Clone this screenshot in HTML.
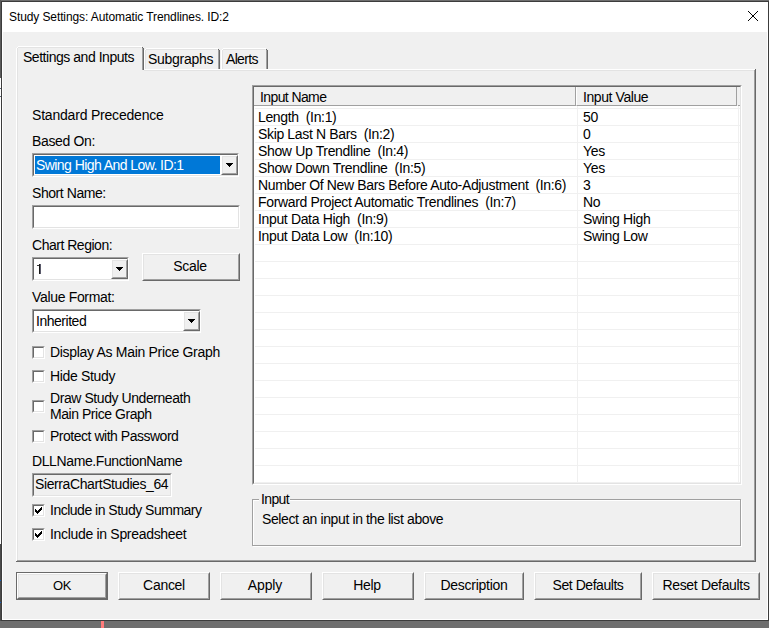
<!DOCTYPE html>
<html><head><meta charset="utf-8">
<style>
*{margin:0;padding:0;box-sizing:border-box}
html,body{width:769px;height:628px;overflow:hidden;background:#6e6e6e}
body{position:relative;font-family:"Liberation Sans",sans-serif;font-size:14px;color:#000;word-spacing:0}
.a{position:absolute}
.t{position:absolute;white-space:pre;line-height:15px;height:15px}
.r{position:absolute;background:#000}
/* sunken 3d */
.sunk{position:absolute;border-top:1px solid #a0a0a0;border-left:1px solid #a0a0a0;border-right:1px solid #fff;border-bottom:1px solid #fff}
.sunk>.in{position:absolute;left:0;top:0;right:0;bottom:0;border-top:1px solid #696969;border-left:1px solid #696969;border-right:1px solid #e3e3e3;border-bottom:1px solid #e3e3e3}
.btn{position:absolute;background:#f0f0f0;border-top:1px solid #fff;border-left:1px solid #fff;border-right:1px solid #696969;border-bottom:1px solid #696969}
.btn>.in{position:absolute;left:0;top:0;right:0;bottom:0;border-top:1px solid #e3e3e3;border-left:1px solid #e3e3e3;border-right:1px solid #a0a0a0;border-bottom:1px solid #a0a0a0}
.cb{position:absolute;width:13px;height:13px;background:#fff;border-top:1px solid #a0a0a0;border-left:1px solid #a0a0a0;border-right:1px solid #fff;border-bottom:1px solid #fff}
.cb>.in{position:absolute;left:0;top:0;right:0;bottom:0;border-top:1px solid #696969;border-left:1px solid #696969;border-right:1px solid #e3e3e3;border-bottom:1px solid #e3e3e3}
.lbl{position:absolute;white-space:pre;line-height:15px;height:15px;text-align:center}
</style></head><body>
<!-- dialog frame -->
<div class="a" style="left:0;top:0;width:1px;height:78px;background:#5a5a5a"></div>
<div class="a" style="left:0;top:78px;width:1px;height:466px;background:#fff"></div>
<div class="a" style="left:0;top:88px;width:1px;height:1px;background:#606a78"></div>
<div class="a" style="left:0;top:96px;width:1px;height:1px;background:#606a78"></div>
<div class="a" style="left:0;top:544px;width:1px;height:77px;background:#4a4a4a"></div>
<div class="a" style="left:0;top:580px;width:1px;height:1px;background:#1060c0"></div>
<div class="a" style="left:0;top:602px;width:1px;height:1px;background:#1060c0"></div>
<div class="a" style="left:1px;top:1px;width:768px;height:620px;background:#3c3c3c"></div>
<div class="a" style="left:2px;top:2px;width:766px;height:618px;background:#fff"></div>
<div class="a" style="left:3px;top:32px;width:764px;height:587px;background:#f0f0f0"></div>
<!-- title -->
<div class="t" style="left:9px;top:10px;font-size:12px;letter-spacing:-0.1px;word-spacing:0">Study Settings: Automatic Trendlines. ID:2</div>
<svg class="a" style="left:748px;top:11px" width="10" height="10" shape-rendering="crispEdges">
<path d="M0 0h1v1h1v1h1v1h1v1h2v-1h1v-1h1v-1h1v-1h1v1h-1v1h-1v1h-1v1h-1v2h1v1h1v1h1v1h1v1h-1v-1h-1v-1h-1v-1h-1v-1h-2v1h-1v1h-1v1h-1v1h-1v-1h1v-1h1v-1h1v-1h1v-2h-1v-1h-1v-1h-1v-1h-1z" fill="#000"/>
</svg>

<!-- tab panel -->
<div class="a" style="left:16px;top:69px;width:740px;height:1px;background:#fff"></div>
<div class="a" style="left:16px;top:69px;width:1px;height:493px;background:#fff"></div>
<div class="a" style="left:755px;top:69px;width:1px;height:493px;background:#696969"></div>
<div class="a" style="left:16px;top:561px;width:740px;height:1px;background:#696969"></div>
<div class="a" style="left:17px;top:70px;width:738px;height:1px;background:#e3e3e3"></div>
<div class="a" style="left:17px;top:70px;width:1px;height:491px;background:#e3e3e3"></div>
<div class="a" style="left:754px;top:70px;width:1px;height:491px;background:#a0a0a0"></div>
<div class="a" style="left:17px;top:560px;width:738px;height:1px;background:#a0a0a0"></div>
<!-- tabs -->
<div class="a" style="left:146px;top:48px;width:72px;height:1px;background:#fff"></div>
<div class="a" style="left:146px;top:49px;width:71px;height:1px;background:#e3e3e3"></div>
<div class="a" style="left:145px;top:49px;width:1px;height:1px;background:#fff"></div>
<div class="a" style="left:144px;top:50px;width:1px;height:19px;background:#fff"></div>
<div class="a" style="left:145px;top:50px;width:1px;height:19px;background:#e3e3e3"></div>
<div class="a" style="left:218px;top:49px;width:1px;height:1px;background:#696969"></div>
<div class="a" style="left:218px;top:50px;width:1px;height:19px;background:#a0a0a0"></div>
<div class="a" style="left:219px;top:50px;width:1px;height:19px;background:#696969"></div>
<div class="t" style="left:148px;top:52px;letter-spacing:-0.276px">Subgraphs</div>
<div class="a" style="left:223px;top:48px;width:43px;height:1px;background:#fff"></div>
<div class="a" style="left:223px;top:49px;width:42px;height:1px;background:#e3e3e3"></div>
<div class="a" style="left:222px;top:49px;width:1px;height:1px;background:#fff"></div>
<div class="a" style="left:221px;top:50px;width:1px;height:19px;background:#fff"></div>
<div class="a" style="left:222px;top:50px;width:1px;height:19px;background:#e3e3e3"></div>
<div class="a" style="left:266px;top:49px;width:1px;height:1px;background:#696969"></div>
<div class="a" style="left:266px;top:50px;width:1px;height:19px;background:#a0a0a0"></div>
<div class="a" style="left:267px;top:50px;width:1px;height:19px;background:#696969"></div>
<div class="t" style="left:226px;top:52px;letter-spacing:-0.68px">Alerts</div>
<!-- selected tab -->
<div class="a" style="left:17px;top:47px;width:127px;height:25px;background:#f0f0f0"></div>
<div class="a" style="left:18px;top:46px;width:124px;height:1px;background:#fff"></div>
<div class="a" style="left:18px;top:47px;width:123px;height:1px;background:#e3e3e3"></div>
<div class="a" style="left:17px;top:47px;width:1px;height:1px;background:#fff"></div>
<div class="a" style="left:16px;top:48px;width:1px;height:22px;background:#fff"></div>
<div class="a" style="left:17px;top:48px;width:1px;height:24px;background:#e3e3e3"></div>
<div class="a" style="left:142px;top:47px;width:1px;height:1px;background:#696969"></div>
<div class="a" style="left:142px;top:48px;width:1px;height:22px;background:#a0a0a0"></div>
<div class="a" style="left:143px;top:48px;width:1px;height:22px;background:#696969"></div>
<div class="t" style="left:23px;top:50px;letter-spacing:-0.467px">Settings and Inputs</div>

<!-- left column -->
<div class="t" style="left:32px;top:108px;letter-spacing:-0.2px">Standard Precedence</div>
<div class="t" style="left:32px;top:134px;letter-spacing:-0.349px">Based On:</div>
<div class="sunk" style="left:32px;top:153px;width:207px;height:24px;background:#fff"><div class="in"></div></div>
<div class="a" style="left:35px;top:156px;width:185px;height:18px;background:#0078d7"></div>
<div class="t" style="left:36px;top:158px;color:#fff;letter-spacing:-0.565px">Swing High And Low. ID:1</div>
<div class="btn" style="left:221px;top:155px;width:17px;height:20px"><div class="in"></div></div>
<svg class="a" style="left:226px;top:163px" width="7" height="4" shape-rendering="crispEdges"><path d="M0 0h7v1h-1v1h-1v1h-1v1h-1v-1h-1v-1h-1v-1h-1z" fill="#000"/></svg>

<div class="t" style="left:32px;top:186px;letter-spacing:-0.44px">Short Name:</div>
<div class="sunk" style="left:32px;top:205px;width:208px;height:24px;background:#fff"><div class="in"></div></div>

<div class="t" style="left:32px;top:238px;letter-spacing:-0.483px">Chart Region:</div>
<div class="sunk" style="left:32px;top:257px;width:97px;height:24px;background:#fff"><div class="in"></div></div>
<div class="a" style="left:39px;top:264px;width:1px;height:10px;background:#1a1a1a"></div><div class="a" style="left:40px;top:264px;width:1px;height:10px;background:#5a5a6a"></div><div class="a" style="left:37px;top:265px;width:2px;height:1px;background:#3a3a3a"></div>
<div class="btn" style="left:111px;top:259px;width:17px;height:20px"><div class="in"></div></div>
<svg class="a" style="left:116px;top:267px" width="7" height="4" shape-rendering="crispEdges"><path d="M0 0h7v1h-1v1h-1v1h-1v1h-1v-1h-1v-1h-1v-1h-1z" fill="#000"/></svg>
<div class="btn" style="left:142px;top:253px;width:98px;height:28px"><div class="in"></div></div>
<div class="lbl" style="left:141px;top:259px;width:98px;letter-spacing:-0.3px">Scale</div>

<div class="t" style="left:32px;top:290px;letter-spacing:-0.333px">Value Format:</div>
<div class="sunk" style="left:32px;top:309px;width:169px;height:24px;background:#fff"><div class="in"></div></div>
<div class="t" style="left:36px;top:314px;letter-spacing:-0.475px">Inherited</div>
<div class="btn" style="left:183px;top:311px;width:17px;height:20px"><div class="in"></div></div>
<svg class="a" style="left:188px;top:319px" width="7" height="4" shape-rendering="crispEdges"><path d="M0 0h7v1h-1v1h-1v1h-1v1h-1v-1h-1v-1h-1v-1h-1z" fill="#000"/></svg>

<div class="cb" style="left:32px;top:346px"><div class="in"></div></div>
<div class="t" style="left:50px;top:345px;letter-spacing:-0.308px">Display As Main Price Graph</div>
<div class="cb" style="left:32px;top:370px"><div class="in"></div></div>
<div class="t" style="left:50px;top:369px;letter-spacing:-0.333px">Hide Study</div>
<div class="cb" style="left:32px;top:400px"><div class="in"></div></div>
<div class="t" style="left:50px;top:391px;letter-spacing:-0.43px">Draw Study Underneath</div>
<div class="t" style="left:50px;top:407px;letter-spacing:-0.454px">Main Price Graph</div>
<div class="cb" style="left:32px;top:430px"><div class="in"></div></div>
<div class="t" style="left:50px;top:429px;letter-spacing:-0.48px">Protect with Password</div>

<div class="t" style="left:32px;top:454px;letter-spacing:-0.39px">DLLName.FunctionName</div>
<div class="sunk" style="left:32px;top:473px;width:140px;height:24px;background:#f0f0f0"><div class="in"></div></div>
<div class="t" style="left:35px;top:477px;width:134px;overflow:hidden;letter-spacing:-0.4px">SierraChartStudies_64.dll</div>

<div class="cb" style="left:32px;top:504px"><div class="in"></div></div>
<svg class="a" style="left:35px;top:507px" width="7" height="7" shape-rendering="crispEdges"><path d="M6 0h1v3h-1v1h-1v1h-1v1h-1v1h-1v-1h-1v-1h-1v-3h1v1h1v1h1v-1h1v-1h1v-1h1z" fill="#000"/></svg>
<div class="t" style="left:50px;top:503px;letter-spacing:-0.496px">Include in Study Summary</div>
<div class="cb" style="left:32px;top:528px"><div class="in"></div></div>
<svg class="a" style="left:35px;top:531px" width="7" height="7" shape-rendering="crispEdges"><path d="M6 0h1v3h-1v1h-1v1h-1v1h-1v1h-1v-1h-1v-1h-1v-3h1v1h1v1h1v-1h1v-1h1v-1h1z" fill="#000"/></svg>
<div class="t" style="left:50px;top:527px;letter-spacing:-0.314px">Include in Spreadsheet</div>

<!-- listview -->
<div class="sunk" style="left:252px;top:85px;width:490px;height:400px;background:#fff"><div class="in"></div></div>
<div id="lv" class="a" style="font-size:14px;word-spacing:0;letter-spacing:-0.35px;left:254px;top:87px;width:486px;height:396px;overflow:hidden">
  <div class="a" style="left:0;top:0;width:486px;height:19px;background:#f0f0f0"></div>
  <div class="a" style="left:0;top:0;width:322px;height:19px;border-right:1px solid #a0a0a0;border-bottom:1px solid #a0a0a0"></div>
  <div class="a" style="left:322px;top:0;width:161px;height:19px;border-left:1px solid #fff;border-right:1px solid #a0a0a0;border-bottom:1px solid #a0a0a0"></div>
  <div class="t" style="left:6px;top:3px;letter-spacing:-0.6px">Input Name</div>
  <div class="t" style="left:329px;top:3px;letter-spacing:-0.42px">Input Value</div>
  <div class="a" style="left:1px;top:21px;width:485px;height:1px;background:#f0f0f0"></div>
<div class="a" style="left:1px;top:38px;width:485px;height:1px;background:#f0f0f0"></div>
<div class="a" style="left:1px;top:55px;width:485px;height:1px;background:#f0f0f0"></div>
<div class="a" style="left:1px;top:72px;width:485px;height:1px;background:#f0f0f0"></div>
<div class="a" style="left:1px;top:89px;width:485px;height:1px;background:#f0f0f0"></div>
<div class="a" style="left:1px;top:106px;width:485px;height:1px;background:#f0f0f0"></div>
<div class="a" style="left:1px;top:123px;width:485px;height:1px;background:#f0f0f0"></div>
<div class="a" style="left:1px;top:140px;width:485px;height:1px;background:#f0f0f0"></div>
<div class="a" style="left:1px;top:157px;width:485px;height:1px;background:#f0f0f0"></div>
<div class="a" style="left:1px;top:174px;width:485px;height:1px;background:#f0f0f0"></div>
<div class="a" style="left:1px;top:191px;width:485px;height:1px;background:#f0f0f0"></div>
<div class="a" style="left:1px;top:208px;width:485px;height:1px;background:#f0f0f0"></div>
<div class="a" style="left:1px;top:225px;width:485px;height:1px;background:#f0f0f0"></div>
<div class="a" style="left:1px;top:242px;width:485px;height:1px;background:#f0f0f0"></div>
<div class="a" style="left:1px;top:259px;width:485px;height:1px;background:#f0f0f0"></div>
<div class="a" style="left:1px;top:276px;width:485px;height:1px;background:#f0f0f0"></div>
<div class="a" style="left:1px;top:293px;width:485px;height:1px;background:#f0f0f0"></div>
<div class="a" style="left:1px;top:310px;width:485px;height:1px;background:#f0f0f0"></div>
<div class="a" style="left:1px;top:327px;width:485px;height:1px;background:#f0f0f0"></div>
<div class="a" style="left:1px;top:344px;width:485px;height:1px;background:#f0f0f0"></div>
<div class="a" style="left:1px;top:361px;width:485px;height:1px;background:#f0f0f0"></div>
<div class="a" style="left:1px;top:378px;width:485px;height:1px;background:#f0f0f0"></div>
<div class="a" style="left:1px;top:395px;width:485px;height:1px;background:#f0f0f0"></div>
<div class="a" style="left:323px;top:19px;width:1px;height:377px;background:#f0f0f0"></div>
<div class="a" style="left:484px;top:19px;width:1px;height:377px;background:#f0f0f0"></div>
<div class="t" style="left:4px;top:23px">Length  (In:1)</div>
<div class="t" style="left:329px;top:23px">50</div>
<div class="t" style="left:4px;top:40px">Skip Last N Bars  (In:2)</div>
<div class="t" style="left:329px;top:40px">0</div>
<div class="t" style="left:4px;top:57px">Show Up Trendline  (In:4)</div>
<div class="t" style="left:329px;top:57px">Yes</div>
<div class="t" style="left:4px;top:74px">Show Down Trendline  (In:5)</div>
<div class="t" style="left:329px;top:74px">Yes</div>
<div class="t" style="left:4px;top:91px">Number Of New Bars Before Auto-Adjustment  (In:6)</div>
<div class="t" style="left:329px;top:91px">3</div>
<div class="t" style="left:4px;top:108px">Forward Project Automatic Trendlines  (In:7)</div>
<div class="t" style="left:329px;top:108px">No</div>
<div class="t" style="left:4px;top:125px">Input Data High  (In:9)</div>
<div class="t" style="left:329px;top:125px">Swing High</div>
<div class="t" style="left:4px;top:142px">Input Data Low  (In:10)</div>
<div class="t" style="left:329px;top:142px">Swing Low</div>

</div>

<div class="a" style="left:738px;top:105px;width:2px;height:1px;background:#a0a0a0"></div>
<!-- group box -->
<div class="a" style="left:253px;top:500px;width:489px;height:47px;border:1px solid #fff"></div>
<div class="a" style="left:252px;top:499px;width:489px;height:47px;border:1px solid #a0a0a0"></div>
<div class="t" style="left:259px;top:492px;padding:0 1px 0 2px;background:#f0f0f0;letter-spacing:-0.65px">Input</div>
<div class="t" style="left:262px;top:512px;letter-spacing:-0.381px">Select an input in the list above</div>

<!-- buttons -->
<div class="a" style="left:16px;top:572px;width:92px;height:28px;border:1px solid #696969"></div>
<div class="btn" style="left:17px;top:573px;width:90px;height:26px"><div class="in"></div></div>
<div class="lbl" style="left:16px;top:578px;width:92px;font-size:13px;letter-spacing:-0.3px">OK</div>
<div class="btn" style="left:118px;top:572px;width:92px;height:28px"><div class="in"></div></div>
<div class="lbl" style="left:118px;top:578px;width:92px;letter-spacing:-0.28px">Cancel</div>
<div class="btn" style="left:220px;top:572px;width:92px;height:28px"><div class="in"></div></div>
<div class="lbl" style="left:219px;top:578px;width:92px;letter-spacing:-0.1px">Apply</div>
<div class="btn" style="left:322px;top:572px;width:92px;height:28px"><div class="in"></div></div>
<div class="lbl" style="left:321px;top:578px;width:92px;letter-spacing:-0.267px">Help</div>
<div class="btn" style="left:424px;top:572px;width:100px;height:28px"><div class="in"></div></div>
<div class="lbl" style="left:424px;top:578px;width:100px;letter-spacing:-0.26px">Description</div>
<div class="btn" style="left:534px;top:572px;width:108px;height:28px"><div class="in"></div></div>
<div class="lbl" style="left:534px;top:578px;width:108px;letter-spacing:-0.455px">Set Defaults</div>
<div class="btn" style="left:652px;top:572px;width:108px;height:28px"><div class="in"></div></div>
<div class="lbl" style="left:652px;top:578px;width:108px;letter-spacing:-0.338px">Reset Defaults</div>

<!-- bottom strip marker -->
<div class="a" style="left:101px;top:621px;width:3px;height:7px;background:#ff7b7b"></div>
</body></html>
